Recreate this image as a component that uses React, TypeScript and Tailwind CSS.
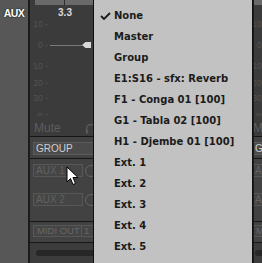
import React from 'react';

const menuItems = [
  'None',
  'Master',
  'Group',
  'E1:S16 - sfx: Reverb',
  'F1 - Conga 01 [100]',
  'G1 - Tabla 02 [100]',
  'H1 - Djembe 01 [100]',
  'Ext. 1',
  'Ext. 2',
  'Ext. 3',
  'Ext. 4',
  'Ext. 5',
];

function ScaleLabel({ text }: { text: string }) {
  return <span className="w-[18px] shrink-0 text-right text-[8.5px] leading-none text-[#545454]">{text}</span>;
}

function Channel({ value }: { value: string }) {
  return (
    <div className="w-[73px] shrink-0 flex flex-col">
      {/* fader area */}
      <div className="h-[136px] bg-[#3b3b3b] flex flex-col">
        <div className="mx-[5px] h-[5px] bg-[#6a6a6a] flex">
          <div className="w-[30px] border-r border-[#2e2e2e]" />
        </div>
        <div className="mt-[3px] h-[10px] w-[65px] pl-[5px] text-center text-[10px] font-bold leading-none text-[#dcdcdc]">
          {value}
        </div>
        <div className="mt-[1px] h-[10px] flex items-center"><ScaleLabel text="10 -" /></div>
        <div className="mt-[11px] h-[10px] flex items-center">
          <ScaleLabel text="0 -" />
          <div className="ml-[2px] w-[32px] h-px bg-[#7a7a7a]" />
          <svg width="9" height="6" viewBox="0 0 9 6">
            <polygon points="0,3 3.5,0 9,0 9,6 3.5,6" fill="#d9d9d9" />
          </svg>
        </div>
        <div className="mt-[11px] h-[10px] flex items-center"><ScaleLabel text="10 -" /></div>
        <div className="mt-[7px] h-[10px] flex items-center"><ScaleLabel text="20 -" /></div>
        <div className="mt-[5px] h-[10px] flex items-center"><ScaleLabel text="30 -" /></div>
        <div className="mt-[6px] h-[10px] flex items-center"><ScaleLabel text="∞ -" /></div>
        <div className="mt-[3px] h-[12px] flex items-center pl-[4px]">
          <span className="text-[12px] leading-none text-[#5e5e5e]">Mute</span>
          <svg className="ml-auto mr-[7px]" width="11" height="11" viewBox="0 0 11 11" fill="none">
            <path d="M1.5 7.5V5.5a4 4 0 0 1 8 0v2" stroke="#5a5a5a" strokeWidth="1.3" />
            <rect x="0.8" y="6.5" width="2.4" height="4" fill="#5a5a5a" />
            <rect x="7.8" y="6.5" width="2.4" height="4" fill="#5a5a5a" />
          </svg>
        </div>
      </div>
      <div className="h-px bg-[#161616]" />

      {/* group */}
      <div className="h-[21px] bg-[#424242] pt-[5px]">
        <div className="mx-[3px] h-[13px] bg-[#4b4b4b] border border-[#5b5b5b] flex items-center pl-[2px] text-[10px] leading-none text-[#cfcfcf]">
          GROUP
        </div>
      </div>
      <div className="h-px bg-[#161616]" />

      {/* aux sends */}
      <div className="h-[62px] bg-[#424242] pt-[5px] flex flex-col">
        <div className="h-[13px] flex items-center">
          <div className="ml-[3px] w-[50px] h-[13px] bg-[#454545] border border-[#575757] flex items-center pl-[2px] text-[10px] leading-none text-[#626262]">
            AUX 1
          </div>
          <div className="ml-[2px] w-[12px] h-[12px] rounded-full border border-[#646464]" />
        </div>
        <div className="mt-[16px] h-[13px] flex items-center">
          <div className="ml-[3px] w-[50px] h-[13px] bg-[#454545] border border-[#575757] flex items-center pl-[2px] text-[10px] leading-none text-[#626262]">
            AUX 2
          </div>
          <div className="ml-[2px] w-[12px] h-[12px] rounded-full border border-[#646464]" />
        </div>
      </div>
      <div className="h-px bg-[#161616]" />

      {/* midi out */}
      <div className="h-[20px] bg-[#424242] pt-[3px]">
        <div className="mx-[3px] h-[12px] flex border border-[#575757] bg-[#454545] text-[9.5px] leading-none text-[#676767]">
          <div className="w-[48px] flex items-center pl-[3px] border-r border-[#575757]">MIDI OUT</div>
          <div className="flex-1 flex items-center pl-[2px]">1</div>
        </div>
      </div>
      <div className="h-px bg-[#161616]" />

      {/* scroll */}
      <div className="flex-1 bg-[#3c3c3c] pt-[7px]">
        <div className="mx-[6px] h-[6px] rounded-full bg-[#272727]" />
      </div>
    </div>
  );
}

export default function App() {
  return (
    <div className="relative w-[262px] h-[263px] overflow-hidden flex bg-[#3b3b3b] font-['Liberation_Sans',Arial,sans-serif]">
      <div className="w-[28px] shrink-0 bg-[#575757] flex justify-center pt-[8px]">
        <span className="h-[10px] text-[10.5px] font-bold leading-none tracking-[-0.6px] text-white [text-shadow:0_0_2px_#000]">
          AUX
        </span>
      </div>
      <div className="w-[2px] shrink-0 bg-[#1b1b1b]" />
      <Channel value="3.3" />
      {/* channels hidden behind the menu */}
      <div className="w-[146px] shrink-0 bg-[#3b3b3b]" />
      <Channel value="0.0" />

      {/* send menu */}
      <div className="absolute left-[93px] top-[-1px] w-[160px] h-[275px] bg-[#c2c2c2] border border-[#0f0f0f] shadow-[1px_0_0_#1c1c1c] pt-[5px] font-['DejaVu_Sans',sans-serif] text-[10px] font-bold leading-none text-[#1b1b1b]">
        {menuItems.map((item, i) => (
          <div key={item} className="h-[21px] flex items-center">
            <span className="w-[20px] pl-[6px] flex">
              {i === 0 && (
                <svg width="11" height="8" viewBox="0 0 11 8" fill="none">
                  <polyline points="1,4 4,7 10,1" stroke="#1b1b1b" strokeWidth="1.8" />
                </svg>
              )}
            </span>
            <span>{item}</span>
          </div>
        ))}
      </div>

      {/* mouse pointer */}
      <svg className="absolute left-[66px] top-[166px]" width="13" height="20" viewBox="0 0 13 20">
        <path d="M1 1 L1 16 L4.5 12.5 L7 18.5 L9.5 17.5 L7 11.5 L12 11.5 Z" fill="#fff" stroke="#000" strokeWidth="1" strokeLinejoin="round" />
      </svg>
    </div>
  );
}
